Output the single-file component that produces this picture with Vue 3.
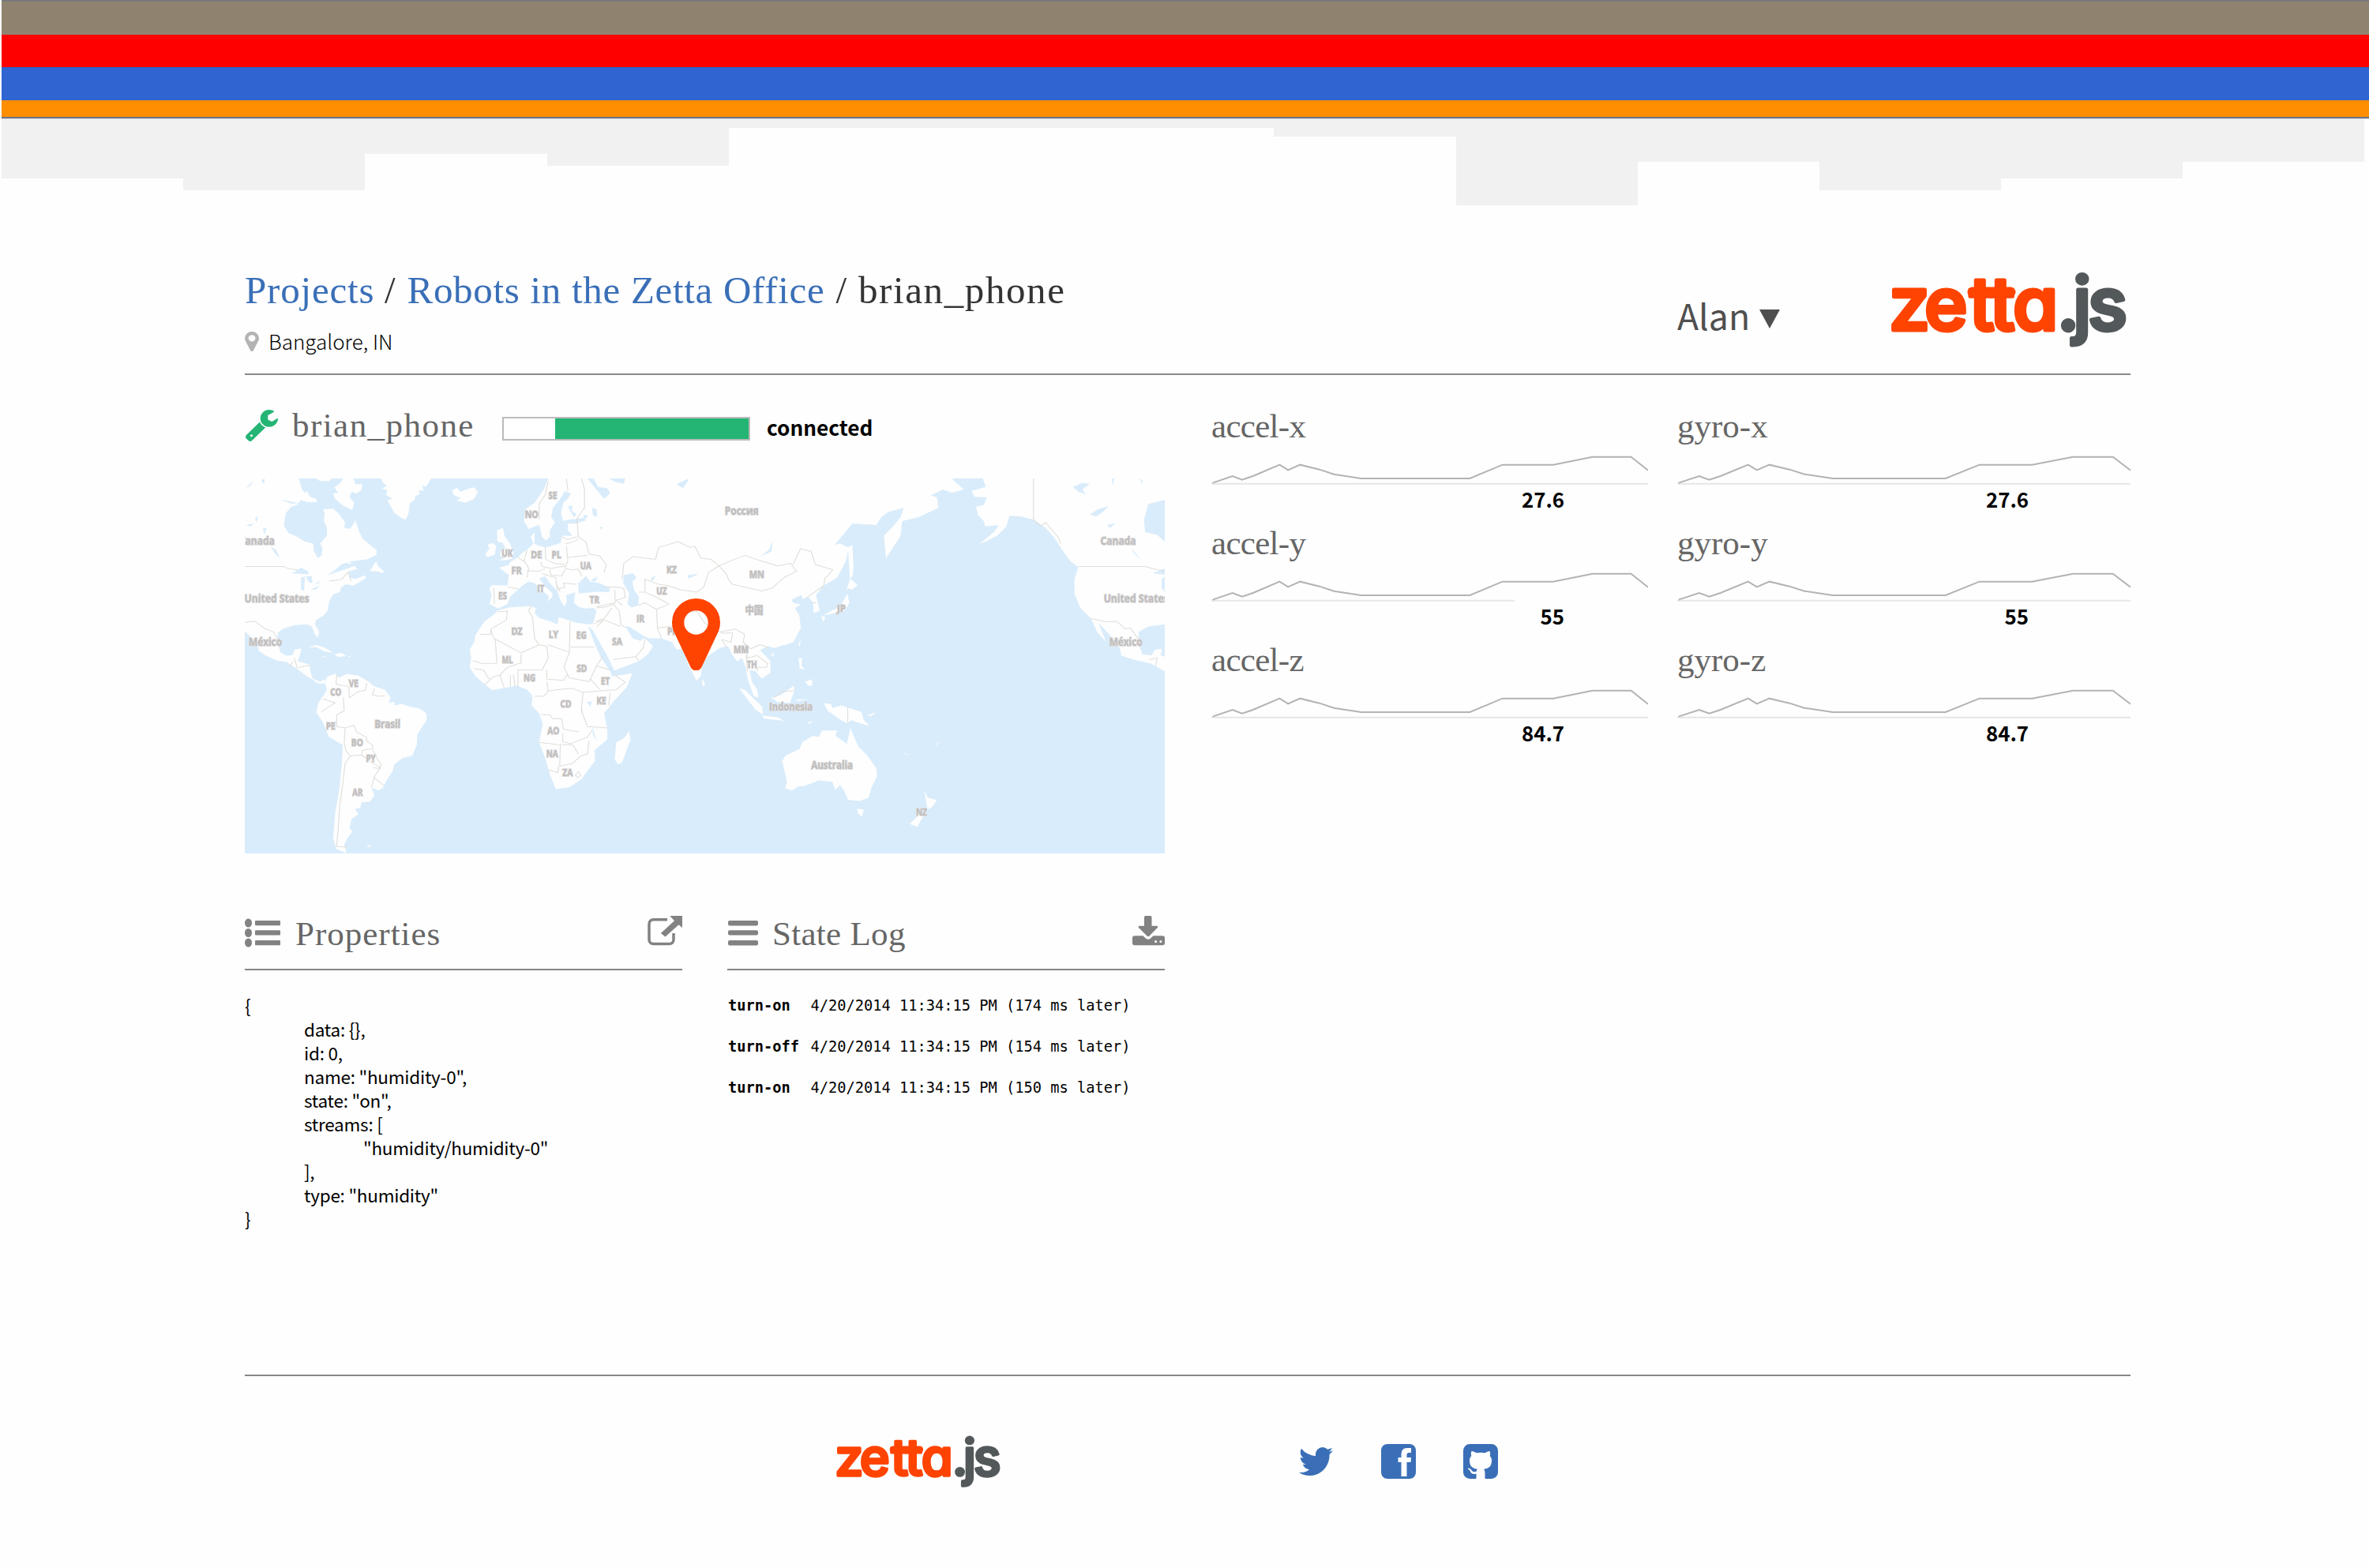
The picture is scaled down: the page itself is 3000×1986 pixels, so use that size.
<script setup>
const stripes = [
  { name: 'edge', height: 2, color: '#77797b' },
  { name: 'taupe', height: 42, color: '#8f8370' },
  { name: 'red', height: 41, color: '#ff0000' },
  { name: 'blue', height: 42, color: '#3064d0' },
  { name: 'orange', height: 21, color: '#ff8e00' },
  { name: 'line', height: 2, color: '#6e7585' },
  { name: 'soft', height: 1, color: '#d9dbe0' },
]
const steps = [75, 89.5, 44, 59, 11, 11, 11, 21.7, 109, 54, 89.7, 75, 54]

const accel = [
  { name: 'accel-x', value: '27.6', base: 754 },
  { name: 'accel-y', value: '55', base: 533 },
  { name: 'accel-z', value: '84.7', base: 754 },
]
const gyro = [
  { name: 'gyro-x', value: '27.6', base: 754 },
  { name: 'gyro-y', value: '55', base: 754 },
  { name: 'gyro-z', value: '84.7', base: 754 },
]
const groups = [accel, gyro]
const spark = '33,335 66,309 82,323 100,309 144,266 158,286 178,266 210,284 234,302 279,318 459,318 513,266 597,266 662,236 726,236 754,287'

const properties = [
  { depth: 0, text: '{' },
  { depth: 1, text: 'data: {},' },
  { depth: 1, text: 'id: 0,' },
  { depth: 1, text: 'name: "humidity-0",' },
  { depth: 1, text: 'state: "on",' },
  { depth: 1, text: 'streams: [' },
  { depth: 2, text: '"humidity/humidity-0"' },
  { depth: 1, text: '],' },
  { depth: 1, text: 'type: "humidity"' },
  { depth: 0, text: '}' },
]
const log = [
  { state: 'turn-on', text: '4/20/2014 11:34:15 PM (174 ms later)' },
  { state: 'turn-off', text: '4/20/2014 11:34:15 PM (154 ms later)' },
  { state: 'turn-on', text: '4/20/2014 11:34:15 PM (150 ms later)' },
]

// [label, centre x, baseline y, drawn width]
const labels = [
  ['Canada', 66, 270, 45], ['United States', 132, 488, 82], ['México', 94, 655, 42],
  ['SE', 1045, 95, 11], ['NO', 975, 169, 17], ['UK', 894, 315, 14], ['DE', 991, 322, 14], ['PL', 1057, 322, 12],
  ['UA', 1154, 363, 14], ['FR', 925, 382, 13], ['IT', 1005, 449, 9], ['ES', 879, 477, 11], ['TR', 1183, 492, 12],
  ['KZ', 1438, 378, 13], ['UZ', 1405, 460, 13], ['IR', 1335, 564, 10], ['PK', 1441, 612, 13], ['DZ', 926, 612, 14],
  ['LY', 1047, 624, 12], ['EG', 1140, 628, 13], ['SA', 1258, 652, 13], ['ML', 895, 719, 14], ['SD', 1141, 751, 13],
  ['NG', 968, 789, 15], ['ET', 1219, 800, 11], ['VE', 386, 808, 12], ['CO', 327, 842, 14], ['KE', 1206, 874, 12],
  ['CD', 1088, 888, 14], ['PE', 310, 970, 12], ['Brasil', 498, 966, 33], ['AO', 1047, 988, 15], ['BO', 398, 1033, 15],
  ['NA', 1043, 1075, 15], ['PY', 443, 1094, 12], ['ZA', 1094, 1147, 13], ['AR', 399, 1222, 13],
  ['Россия', 1670, 157, 43], ['MN', 1720, 396, 19], ['中国', 1711, 531, 23], ['JP', 2000, 525, 11], ['MM', 1668, 682, 19],
  ['TH', 1704, 738, 13], ['Indonesia', 1833, 899, 55], ['Australia', 1969, 1121, 53], ['NZ', 2265, 1298, 14],
  ['Canada', 2916, 270, 45], ['United States', 2975, 488, 82], ['México', 2941, 655, 42],
]
</script>

<template>
  <div class="page">
    <div class="banner">
      <div v-for="s in stripes" :key="s.name" :style="{ height: s.height + 'px', background: s.color }"></div>
      <div class="steps">
        <div v-for="(h, i) in steps" :key="i" class="step" :style="{ height: h + 'px' }"></div>
      </div>
    </div>

    <header class="header">
      <div class="where">
        <h1 class="crumbs">
          <a class="projects">Projects</a><span class="slash">/</span><a class="office">Robots in the Zetta Office</a><span class="slash">/</span><span class="current">brian_phone</span>
        </h1>
        <div class="location">
          <svg class="loc-pin" viewBox="384 128 1024 1536" preserveAspectRatio="none"><path d="M1152 640q0-106-75-181t-181-75-181 75-75 181 75 181 181 75 181-75 75-181zm256 0q0 109-33 179l-364 774q-16 33-47.500 52t-67.500 19-67.500-19-46.500-52l-365-774q-33-70-33-179 0-212 150-362t362-150 362 150 150 362z" /></svg>
          <span>Bangalore, IN</span>
        </div>
      </div>
      <div class="user">
        <span>Alan</span>
        <svg class="caret" viewBox="0 0 26 24"><path d="M0 0H26L13 24Z" /></svg>
      </div>
      <svg class="logo" viewBox="0 0 300 106">
        <text class="wm orange" y="78" x="-1 44 101 127 156">zetta</text>
        <path class="bar" d="M105 30H153" />
        <text class="wm slate" y="78" x="212 232 251">.js</text>
      </svg>
    </header>

    <main class="content">
      <section class="device">
        <div class="device-row">
          <svg class="wrench" viewBox="85 128 1641 1643" preserveAspectRatio="none"><path d="M448 1472q0-26-19-45t-45-19-45 19-19 45 19 45 45 19 45-19 19-45zm644-420l-682 682q-37 37-90 37-52 0-91-37l-106-108q-38-36-38-90 0-53 38-91l681-681q39 98 114.500 173.500t173.500 114.500zm634-435q0 39-23 106-47 134-164.500 217.500t-258.500 83.500q-185 0-316.500-131.500t-131.500-316.500 131.500-316.500 316.500-131.500q58 0 121.500 16.500t107.500 46.500q16 11 16 28t-16 28l-293 169v224l193 107q5-3 79-48.500t135.500-81 70.500-35.500q15 0 23.500 10t8.500 25z" /></svg>
          <h2 class="device-name">brian_phone</h2>
          <div class="meter"><div class="meter-fill"></div></div>
          <strong class="status">connected</strong>
        </div>

        <div class="map">
          <svg class="world" viewBox="26 18 3044 1424" preserveAspectRatio="none">
            <g class="land">
              <path d="M26 18L205 18L215 60L235 85L262 95L265 108L225 105L210 100L200 118L180 125L162 150L155 195L170 225L200 240L225 258L252 265L255 295L268 320L280 310L283 280L275 265L298 235L298 205L288 180L290 150L285 135L318 133L335 150L345 165L358 185L355 205L375 210L392 178L403 215L415 245L440 270L462 290L462 308L430 325L375 333L345 345L325 365L300 385L345 368L390 350L398 362L370 370L375 395L392 400L425 385L425 398L385 425L360 420L345 432L340 450L318 458L305 485L300 520L285 540L262 555L258 572L272 600L268 622L258 610L248 580L232 572L190 575L150 590L135 605L133 640L145 680L165 692L185 688L190 668L213 664L208 690L200 712L240 725L243 750L250 778L275 790L290 780L290 797L268 797L250 782L230 768L212 752L195 738L165 715L130 708L95 690L72 672L70 650L45 620L26 598Z" />
              <path d="M318 75L335 72L322 50L340 38L352 18L385 18L392 40L415 40L412 62L395 75L380 68L372 88L388 110L382 138L350 120L325 95ZM262 18L315 18L305 28L275 28ZM218 85L232 66L245 95L268 102L250 108L228 108ZM440 370L460 333L468 352L487 370L482 378L462 370ZM362 332L385 340L368 342Z" />
              <path d="M478 18L643 18L625 50L612 45L618 65L602 62L605 78L590 85L588 100L572 112L568 150L558 175L540 165L520 148L498 100L515 95L492 80L498 62L480 58L495 45L482 32Z" />
              <path d="M712 65L728 52L738 68L765 58L785 52L797 70L785 95L755 110L727 102L740 92L718 82Z" />
              <path d="M235 660L262 650L290 660L318 680L290 675L262 658ZM322 685L345 680L362 692L335 696ZM282 693L298 694L288 698ZM368 692L378 694L370 697Z" />
              <path d="M290 790L300 770L330 758L335 775L365 760L405 768L435 790L455 808L490 820L508 850L502 870L520 866L522 880L545 874L575 885L605 892L626 910L628 935L605 975L597 990L595 1030L580 1070L548 1080L520 1105L515 1130L495 1165L482 1195L468 1202L445 1192L455 1220L440 1245L412 1248L408 1270L390 1272L402 1292L380 1310L372 1345L382 1358L365 1385L355 1410L362 1441L330 1425L318 1385L322 1340L325 1290L340 1190L347 1100L350 1030L305 1000L285 945L262 905L270 870L285 845L298 820ZM428 1413L445 1410L438 1418Z" />
              <path d="M865 330L890 318L870 312L875 290L888 285L880 262L862 258L860 215L880 205L885 235L905 268L915 300L912 322L890 328ZM822 305L835 285L830 270L848 262L858 275L853 308L828 317Z" />
              <path d="M1030 18L1015 60L985 110L955 135L950 180L965 210L985 200L1000 195L1010 240L1022 253L1035 240L1035 215L1052 185L1040 165L1045 130L1070 95L1085 65L1105 75L1095 95L1080 110L1072 150L1080 180L1110 172L1135 178L1130 188L1095 190L1095 215L1110 235L1075 235L1072 262L1045 272L1020 280L995 272L980 262L972 240L985 222L985 262L960 288L945 300L930 318L905 335L898 348L868 356L880 368L900 385L895 425L845 423L835 435L843 460L836 495L865 512L895 495L905 465L930 440L950 420L965 410L985 415L1005 440L1032 465L1028 485L1042 470L1045 455L1022 430L1000 398L1020 390L1035 415L1060 445L1070 480L1085 507L1092 480L1088 462L1120 450L1115 490L1130 505L1150 512L1180 510L1190 520L1178 570L1160 572L1120 565L1095 555L1065 545L1060 572L1035 560L1000 548L985 530L990 510L965 503L900 508L862 520L850 535L820 560L790 610L785 640L770 668L775 700L770 735L790 770L820 800L845 822L880 815L925 805L960 820L978 845L975 880L1000 910L1012 950L1000 1020L1020 1080L1035 1140L1055 1198L1100 1190L1140 1160L1165 1120L1185 1090L1183 1050L1225 1010L1225 965L1215 910L1250 860L1290 810L1308 758L1250 768L1247 748L1330 712L1360 685L1377 655L1350 625L1345 612L1335 635L1310 625L1285 580L1300 582L1335 612L1365 625L1405 625L1440 640L1455 668L1475 665L1495 730L1520 785L1535 770L1540 720L1560 690L1600 660L1625 655L1640 690L1655 712L1672 700L1685 740L1690 780L1710 845L1726 850L1721 820L1704 790L1696 745L1716 750L1736 778L1766 755L1764 710L1731 670L1756 655L1778 662L1841 640L1866 585L1861 540L1846 510L1866 497L1840 490L1836 478L1868 460L1871 475L1894 470L1906 490L1909 530L1928 520L1921 485L1916 460L1941 425L1986 395L2016 330L2024 280L1996 265L1978 270L2036 190L2116 195L2132 165L2156 145L2206 130L2196 165L2171 200L2141 235L2148 320L2171 280L2196 235L2201 180L2256 165L2321 130L2316 90L2296 82L2336 60L2366 72L2406 60L2380 35L2366 18Z" />
              <path d="M2468 18L2478 50L2431 65L2441 88L2481 90L2472 118L2446 125L2451 155L2471 180L2476 200L2521 195L2506 220L2456 268L2516 235L2546 200L2556 160L2591 162L2636 175L2676 205L2706 245L2731 290L2756 330L2784 355L2771 400L2771 455L2791 510L2826 550L2846 600L2876 640L2850 565L2886 610L2921 660L2926 690L2966 705L3026 722L3070 750V18Z" />
              <path d="M1298 978L1302 1010L1275 1095L1262 1105L1250 1085L1255 1020L1280 1005ZM1540 778L1550 800L1540 808Z" />
              <path d="M2021 280L2036 270L2040 350L2038 385L2028 400L2026 350ZM2016 440L2030 398L2054 424L2034 440L2022 435ZM2020 455L2026 490L2012 520L1976 530L1940 538L1960 525L1996 505L2010 475ZM1934 540L1948 545L1940 562ZM1858 650L1866 625L1862 655ZM1766 688L1780 680L1774 695Z" />
              <path d="M1858 700L1870 700L1868 730L1880 745L1862 738ZM1880 790L1902 780L1904 805L1890 805ZM1842 805L1844 825L1830 870L1790 868L1768 850L1800 840ZM1662 815L1680 820L1738 885L1740 915L1715 895ZM1738 918L1790 925L1810 938L1745 930ZM1850 858L1890 856L1855 864ZM1942 872L1966 875L1970 890L2000 880L2066 905L2074 935L2094 958L2055 945L2035 935L2018 948L1985 925L1955 900ZM2084 918L2116 905L2098 920ZM1888 945L1906 938L1895 950Z" />
              <path d="M1804 1090L1816 1070L1862 1045L1870 1020L1906 995L1925 1000L1936 975L1986 975L1980 995L2018 1025L2030 965L2042 1000L2056 1035L2086 1070L2116 1120L2118 1150L2100 1190L2090 1230L2060 1243L2022 1238L2010 1205L1996 1182L1980 1200L1970 1170L1926 1165L1880 1185L1856 1188L1836 1203L1814 1195L1820 1170ZM2052 1272L2074 1275L2068 1303L2055 1290ZM2274 1202L2286 1230L2316 1240L2300 1265L2285 1275ZM2262 1290L2270 1300L2252 1340L2226 1330ZM2206 1055L2222 1070L2212 1066ZM2312 1028L2328 1012L2316 1030Z" />
            </g>
            <g class="water">
              <path d="M182 380L212 357L235 370L238 382L210 380ZM212 395L225 390L222 445L212 440ZM228 390L248 388L250 415L238 412ZM242 440L275 425L262 440ZM258 420L275 408L270 418ZM30 195L58 188L45 200ZM60 170L70 160L65 185ZM85 208L98 205L92 232ZM110 275L130 290L142 320L128 305ZM30 55L55 25L45 45ZM145 98L205 112L180 114ZM80 25L92 18L90 40Z" />
              <path d="M1130 415L1155 388L1170 410L1200 415L1235 435L1230 450L1190 448L1130 455ZM1170 405L1195 390L1185 410ZM1280 385L1310 378L1322 395L1308 410L1315 445L1330 465L1328 500L1305 508L1292 495L1298 455L1278 415ZM1162 578L1178 595L1200 640L1225 690L1252 755L1245 775L1232 745L1205 700L1185 650ZM1285 578L1300 582L1335 608L1352 620L1335 635L1318 620ZM1095 125L1110 120L1108 140L1125 155L1115 165ZM1105 175L1145 168L1155 178L1125 185ZM1145 155L1162 160L1150 178ZM1175 130L1190 135L1192 165L1178 158ZM1160 18L1180 18L1195 50L1225 55L1235 75L1215 95L1185 55ZM1230 18L1285 18L1280 38L1250 30ZM1455 40L1490 20L1495 25L1475 55ZM1200 200L1212 205L1205 212ZM1730 315L1760 290L1774 253L1768 295ZM1490 385L1530 380L1495 398ZM1368 398L1388 385L1375 408ZM1158 865L1175 865L1168 885ZM1138 880L1145 905L1140 912ZM1175 955L1190 1015L1178 990Z" />
              <path d="M3070 572L3016 580L2984 600L2981 640L2996 685L3026 690L3038 668L3061 665L3056 690L3070 695ZM3070 100L3016 115L3001 175L3005 222L3045 232L3070 258ZM2766 50L2796 35L2822 38L2798 60L2808 78L2784 68ZM2822 155L2848 135L2886 122L2866 145L2844 162ZM2878 195L2906 188L2890 205ZM2958 280L2990 325L2970 305ZM3030 378L3070 360V384ZM3060 400L3070 390V448L3060 435ZM2988 18L2996 25L2994 40ZM2894 18L2902 18L2900 45Z" />
            </g>
            <g class="borders">
              <path d="M26 352H155L168 360L202 366M305 408L345 402L368 374L378 408M26 565L60 560L95 590L120 600L135 630M185 712L175 735M190 700L200 740M205 735L240 728M330 758L328 800L370 808L372 850L400 828L425 822L430 795M455 815L448 840L470 845L490 843M285 855L325 870L278 905M352 850L355 900L330 915L330 960L358 965L388 955L395 980L428 1000L430 1015L448 1030L450 1048L465 1085L478 1105L470 1120L450 1115M358 965L355 1025L362 1055L375 1072L412 1068L415 1050L445 1045M375 1072L358 1100L350 1180L340 1260L335 1350L330 1415L362 1418M412 1068L450 1100L475 1115L455 1150L445 1190M455 1155L485 1182" />
              <path d="M1030 28L1020 80L1000 115V175M1090 18L1095 65M1140 18L1150 60V130L1125 170L1130 240L1155 260L1165 305L1200 312L1222 345L1215 375M1075 240L1095 250L1125 240M1085 265L1105 262L1130 250M1090 275L1095 330L1085 360L1110 365L1130 362L1142 390M1095 318L1160 310M1020 280L1022 325L1050 340L1085 345M960 290L950 330L965 358L960 395M1005 335L1010 352L1040 360L1085 350M960 368L1000 370L1020 360M1035 365L1040 385L1075 388L1085 365M1010 380L1055 395L1060 440L1085 430L1080 415L1125 420M1055 412L1070 450M850 435L852 495M895 430L930 437M930 318L950 335M1215 430L1250 430L1280 435L1285 470L1255 480L1275 500M1250 440L1252 490L1190 505M1190 510L1225 505L1245 495L1265 520L1270 570L1285 585M1190 560L1215 550L1240 510M1190 580L1215 555L1270 580" />
              <path d="M1275 400L1280 340L1310 315L1385 325L1395 280L1460 258L1500 280L1515 275L1535 320L1568 325L1595 350L1640 328L1680 310L1730 330L1790 350L1832 340L1852 370L1810 395L1770 435L1735 445L1640 420L1625 400L1622 385L1595 350L1560 375L1545 430L1520 450L1465 440L1425 425L1395 420L1350 400V450L1330 450M1350 450L1390 470L1430 495L1388 515L1350 490L1328 500M1388 515L1392 590L1405 625M1392 585L1440 580L1480 530L1520 520L1550 570L1600 600L1650 590L1680 610L1675 640L1700 665L1731 650L1756 658M1600 605L1640 605L1635 640L1605 630L1620 660M1680 640L1690 700L1720 690L1756 720L1752 735H1725L1720 750M1840 345L1865 285L1900 295L1914 345L1972 365L1945 400L1942 425L1880 475M1902 490H1918M1775 852L1806 825H1842M2021 885V948M1685 690L1690 750" />
              <path d="M862 525L895 522L892 555L840 590V610H805M840 590L850 625L940 680L1000 650L985 625L978 545L965 520L972 505M855 630L860 720H810L780 710M940 685V718L895 735L870 765M1000 650L1025 655L1030 700L1010 745H930V810M1030 650L1100 678L1102 560M1105 658H1182M1100 678L1082 735L1100 775L1165 790L1190 730L1210 695M1025 745L1025 780L1080 785L1095 760M1190 730L1235 745M1250 765L1285 792L1255 820L1205 825L1170 780M1235 830L1230 880M1030 825L1060 820L1110 815L1145 830L1140 900L1160 960L1225 965M1005 915H1035L1045 930H1075L1080 970L1130 980M1078 985V1018L1105 1025L1160 1000L1175 975M1000 1020L1060 1028L1110 1030M1070 1030L1068 1110L1110 1100L1140 1070L1160 1065L1165 1015M1030 1125L1062 1135L1065 1110M1120 1145L1130 1130L1138 1145L1128 1155ZM1112 1030L1130 1065M985 845H1015L1030 825L1025 790M1145 830L1200 825M820 800L850 770L870 765L885 815M905 765V808M915 765L920 808M785 740L815 745L835 780M1245 705L1320 695L1345 660L1350 625M1320 695L1330 712M1182 570L1210 555" />
              <path d="M2636 18V175L2660 200L2676 185L2720 245L2724 265M2784 352H3005L3045 365L3070 368M2826 550L2876 563L2911 560L2940 590L2956 585L2984 630M3020 705L3045 700L3040 730" />
            </g>
            <g class="labels">
              <text v-for="(l, i) in labels" :key="i" :transform="`translate(${l[1]} ${l[2]}) scale(2.613 3)`" :textLength="l[3]" lengthAdjust="spacingAndGlyphs" :class="{ long: l[0].length > 2 }">{{ l[0] }}</text>
            </g>
          </svg>
          <svg class="pin" viewBox="384 128 1024 1536" preserveAspectRatio="none"><path d="M1152 640q0-106-75-181t-181-75-181 75-75 181 75 181 181 75 181-75 75-181zm256 0q0 109-33 179l-364 774q-16 33-47.500 52t-67.500 19-67.500-19-46.500-52l-365-774q-33-70-33-179 0-212 150-362t362-150 362 150 150 362z" /></svg>
        </div>

        <div class="panels">
          <section class="panel">
            <div class="panel-head">
              <svg class="ico-list" viewBox="0 0 45 37"><g><ellipse cx="4.500" cy="6" rx="4.500" ry="5.500" /><ellipse cx="4.500" cy="18.500" rx="4.500" ry="5.500" /><ellipse cx="4.500" cy="31" rx="4.500" ry="5.500" /><rect x="13" y="3" width="32" height="6.300" rx="1" /><rect x="13" y="15.300" width="32" height="6.300" rx="1" /><rect x="13" y="28" width="32" height="6.300" rx="1" /></g></svg>
              <h3 class="t-props">Properties</h3>
              <svg class="ico-right" width="44" height="38" viewBox="0 0 44 38"><path class="line" d="M25 4.700H7.500a5.500 5.500 0 0 0-5.500 5.500V30a5.500 5.500 0 0 0 5.500 5.500H27.500a5.500 5.500 0 0 0 5.500-5.500V22" /><path d="M28.300 0H44V15L39.500 11.300 22.500 26.500 16.800 22 34 6.300Z" /></svg>
            </div>
            <pre class="json"><span v-for="(p, i) in properties" :key="i" :class="'d' + p.depth">{{ p.text }}</span></pre>
          </section>
          <section class="panel">
            <div class="panel-head">
              <svg class="ico-bars" viewBox="0 0 38 37"><rect y="3" width="38" height="6.400" rx="2" /><rect y="15.300" width="38" height="6.300" rx="2" /><rect y="28" width="38" height="6.400" rx="2" /></svg>
              <h3 class="t-log">State Log</h3>
              <svg class="ico-right" width="41" height="38" viewBox="0 0 41 38"><path d="M15 1.500Q15 0 16.500 0H23Q24.500 0 24.500 1.500V12.700H31Q33 13 32 14.700L21.500 25.500Q20 26.500 18.500 25.500L7.800 14.700Q7 13 8.500 12.700H15Z" /><path fill-rule="evenodd" d="M3 25.200H13.500L17.500 29Q20 30.500 22.500 29L26.500 25.200H38Q41 25.200 41 28V34.500Q41 37.300 38 37.300H3Q0 37.300 0 34.500V28Q0 25.200 3 25.200ZM28 32.600a1.600 1.600 0 1 0 3.200 0 1.600 1.600 0 1 0-3.200 0ZM34.300 32.600a1.600 1.600 0 1 0 3.200 0 1.600 1.600 0 1 0-3.200 0Z" /></svg>
            </div>
            <div class="log">
              <div v-for="(e, i) in log" :key="i" class="log-row"><b>{{ e.state }}</b><span>{{ e.text }}</span></div>
            </div>
          </section>
        </div>
      </section>

      <section v-for="(g, gi) in groups" :key="gi" class="sensors" :class="gi ? 'gyro' : 'accel'">
        <div v-for="s in g" :key="s.name" class="sensor">
          <h2>{{ s.name }}</h2>
          <svg class="spark" viewBox="31 228 723 114" preserveAspectRatio="none">
            <path class="base" :d="`M31 338H${s.base}`" />
            <polyline :points="spark" />
          </svg>
          <strong>{{ s.value }}</strong>
        </div>
      </section>
    </main>

    <footer class="footer">
      <svg class="logo" viewBox="0 0 300 106">
        <text class="wm orange" y="78" x="-1 44 101 127 156">zetta</text>
        <path class="bar" d="M105 30H153" />
        <text class="wm slate" y="78" x="212 232 251">.js</text>
      </svg>
      <svg class="twitter" viewBox="108 256 1576 1280" preserveAspectRatio="none"><path d="M1684 408q-67 98-162 167 1 14 1 42 0 130-38 259.500t-115.500 248.500-184.500 210.500-258 146-323 54.500q-271 0-496-145 35 4 78 4 225 0 401-138-105-2-188-64.500t-114-159.500q33 5 61 5 43 0 85-11-112-23-185.500-111.500t-73.500-205.500v-4q68 38 146 41-66-44-105-115t-39-154q0-88 44-163 121 149 294.500 238.500t371.500 99.500q-8-38-8-74 0-134 94.500-228.500t228.500-94.500q140 0 236 102 109-21 205-78-37 115-142 178 93-10 186-50z" /></svg>
      <svg class="square fb" viewBox="0 0 44 44"><rect width="44" height="44" rx="8" /><path class="cut" d="M25.500 41V23H21.500V17H25.500V13Q25.500 5 33 5H38V11H35Q32.500 11 32.500 13.500V17H38L37.500 23H32.500V41Z" /></svg>
      <svg class="square" viewBox="128 128 1536 1536"><path d="M1664 416v960q0 119-84.500 203.500t-203.500 84.500h-224q-16 0-24.500-1t-19.500-5-16-14.500-5-27.500v-239q0-97-52-142 57-6 102.500-18t94-39 81-66.500 53-105 20.500-150.500q0-121-79-206 37-91-8-204-28-9-81 11t-92 44l-38 24q-93-26-192-26t-192 26q-16-11-42.500-27t-83.500-38.500-86-13.500q-44 113-7 204-79 85-79 206 0 85 20.500 150t52.500 105 80.500 67 94 39 102.500 18q-40 36-49 103-21 10-45 15t-57 5-65.500-21.500-55.500-62.500q-19-32-48.500-52t-49.500-24l-20-3q-21 0-29 4.500t-5 11.500 9 14 13 12l7 5q22 10 43.500 38t31.500 51l10 23q13 38 44 61.500t67 30 69.500 7 55.500-3.500l23-4q0 38 .5 103t.5 68q0 22-11 33.500t-22 13-33 1.500h-224q-119 0-203.500-84.500t-84.500-203.500v-960q0-119 84.500-203.500t203.500-84.500h960q119 0 203.500 84.500t84.500 203.500z" /></svg>
    </footer>
  </div>
</template>

<style>
body { margin: 0; background: #fefefe; }
</style>

<style scoped>
.page { width: 3000px; height: 1986px; overflow: hidden; background: #fefefe; font-family: "Noto Sans CJK SC", "Noto Sans", sans-serif; color: #000; }
h1, h2, h3, pre { margin: 0; font-weight: 400; }
svg { display: block; flex: none; }
.banner { height: 300px; margin-left: 2px; }
.steps { display: flex; align-items: flex-start; }
.step { width: 230.2px; background: #f1f1f1; }

.header { box-sizing: border-box; display: flex; align-items: flex-start; width: 2388px; height: 175px; margin-left: 310px; border-bottom: 2px solid #888; }
.where { width: 1814px; padding-top: 38px; }
.crumbs { display: flex; font: 49px/60px "Liberation Serif", serif; color: #333; white-space: nowrap; }
.crumbs a { color: #3a6fb7; }
.projects { width: 162px; letter-spacing: 0.8px; }
.office { width: 528px; letter-spacing: 0.7px; }
.current { letter-spacing: 1.6px; }
.slash { width: 43.5px; text-align: center; }
.location { display: flex; align-items: flex-start; margin-top: 14px; font-size: 26px; line-height: 40px; font-weight: 300; }
.loc-pin { width: 18px; height: 25px; margin: 8px 12px 0 0; fill: #b3b3b3; }
.user { display: flex; width: 269px; padding-top: 69px; font-size: 44.6px; line-height: 60px; color: #4f4f4f; }
.caret { width: 26px; height: 24px; margin: 23px 0 0 12px; fill: #4f4f4f; }
.logo { width: 300px; height: 106px; margin-top: 40px; overflow: visible; }
.wm { font: 500 93px Inter, sans-serif; font-feature-settings: "cv11"; stroke-width: 5; stroke-linejoin: round; stroke-linecap: round; }
.orange { fill: #ff4300; stroke: #ff4300; }
.slate { fill: #53585a; stroke: #53585a; }
.bar { stroke: #ff4300; stroke-width: 13; stroke-linecap: round; }

.content { display: grid; grid-template-columns: 1165px 612px 611px; width: 2388px; height: 1266px; margin-left: 310px; }
.accel { padding-left: 59px; }
.gyro { padding-left: 37px; }
.device-row { display: flex; align-items: flex-start; height: 60px; padding-top: 33px; line-height: 60px; }
.wrench { width: 41px; height: 40px; margin: 11px 18px 0 1px; fill: #24b574; }
.device-name { width: 266px; margin-top: 1px; font: 43px/60px "Liberation Serif", serif; letter-spacing: 1.45px; color: #666; }
.meter { box-sizing: border-box; display: flex; justify-content: flex-end; width: 314px; height: 30px; margin-top: 20px; border: 2px solid #bbb; background: #fff; }
.meter-fill { width: 245px; background: #24b574; }
.status { margin: 3px 0 0 21px; font-size: 26.200px; font-weight: 700; }

.map { position: relative; height: 475px; margin-top: 38px; background: #d9ecfb; overflow: hidden; }
.world { width: 1165px; height: 475px; }
.land { fill: #fefefe; }
.water { fill: #d9ecfb; }
.borders { fill: none; stroke: #dededa; stroke-width: 3; stroke-linejoin: round; }
.labels text { font: 700 13px "Open Sans", "Noto Sans CJK SC", sans-serif; text-anchor: middle; fill: #bfbdbd; stroke: #e0dede; stroke-width: 1.8px; paint-order: stroke; }
.labels .long { font-size: 14px; }
.pin { position: absolute; left: 541px; top: 151.500px; width: 61px; height: 91.500px; fill: #ff4300; }

.panels { display: flex; justify-content: space-between; margin-top: 71px; }
.panel { width: 554px; }
.panel-head { box-sizing: border-box; display: flex; align-items: flex-start; height: 77px; border-bottom: 2px solid #858585; fill: #828282; }
.panel-head h3 { margin-top: 1px; font: 43px/60px "Liberation Serif", serif; color: #666; }
.ico-list { width: 45px; height: 37px; margin: 11px 19px 0 0; }
.ico-bars { width: 38px; height: 37px; margin: 11px 18px 0 1px; }
.ico-right { margin: 8px 0 0 auto; }
.line { fill: none; stroke: #828282; stroke-width: 3.5; }
.panel-head .t-props { letter-spacing: 1px; }
.panel-head .t-log { letter-spacing: 0.3px; }
.json { display: flex; flex-direction: column; margin-top: 29px; font: 22.500px/30px "Noto Sans CJK SC", sans-serif; letter-spacing: -0.25px; }
.json span { height: 30px; }
.d1 { margin-left: 75px; }
.d2 { margin-left: 150px; }
.log { margin-top: 19px; font: 18.700px/52px "DejaVu Sans Mono", monospace; }
.log-row { display: flex; height: 52px; padding-left: 1px; white-space: pre; }
.log-row b { width: 104.5px; }

.sensors { padding-top: 35px; }
.sensor { display: flex; flex-direction: column; height: 148px; }
.sensor h2 { height: 60px; margin-bottom: 6px; font: 43px/60px "Liberation Serif", serif; color: #666; }
.accel h2 { letter-spacing: -0.7px; }
.spark { width: 553px; height: 38px; }
.gyro .spark { width: 574px; }
.spark polyline { fill: none; stroke: #b3b3b3; stroke-width: 2px; vector-effect: non-scaling-stroke; }
.base { fill: none; stroke: #e6e6e6; stroke-width: 2px; vector-effect: non-scaling-stroke; }
.sensor strong { align-self: flex-end; margin-right: 106px; font-size: 25.800px; line-height: 36px; font-weight: 700; }
.gyro strong { margin-right: 129px; }

.footer { box-sizing: border-box; display: flex; align-items: flex-start; width: 2388px; height: 245px; padding-left: 748px; margin-left: 310px; border-top: 2px solid #888; fill: #3a6fb7; }
.footer .logo { width: 209px; height: 74px; margin-top: 72px; }
.twitter { width: 43px; height: 36px; margin: 90px 0 0 378px; }
.square { width: 44px; height: 44px; margin: 86px 0 0 61px; }
.square + .square { margin-left: 60px; }
.cut { fill: #fefefe; }
</style>
